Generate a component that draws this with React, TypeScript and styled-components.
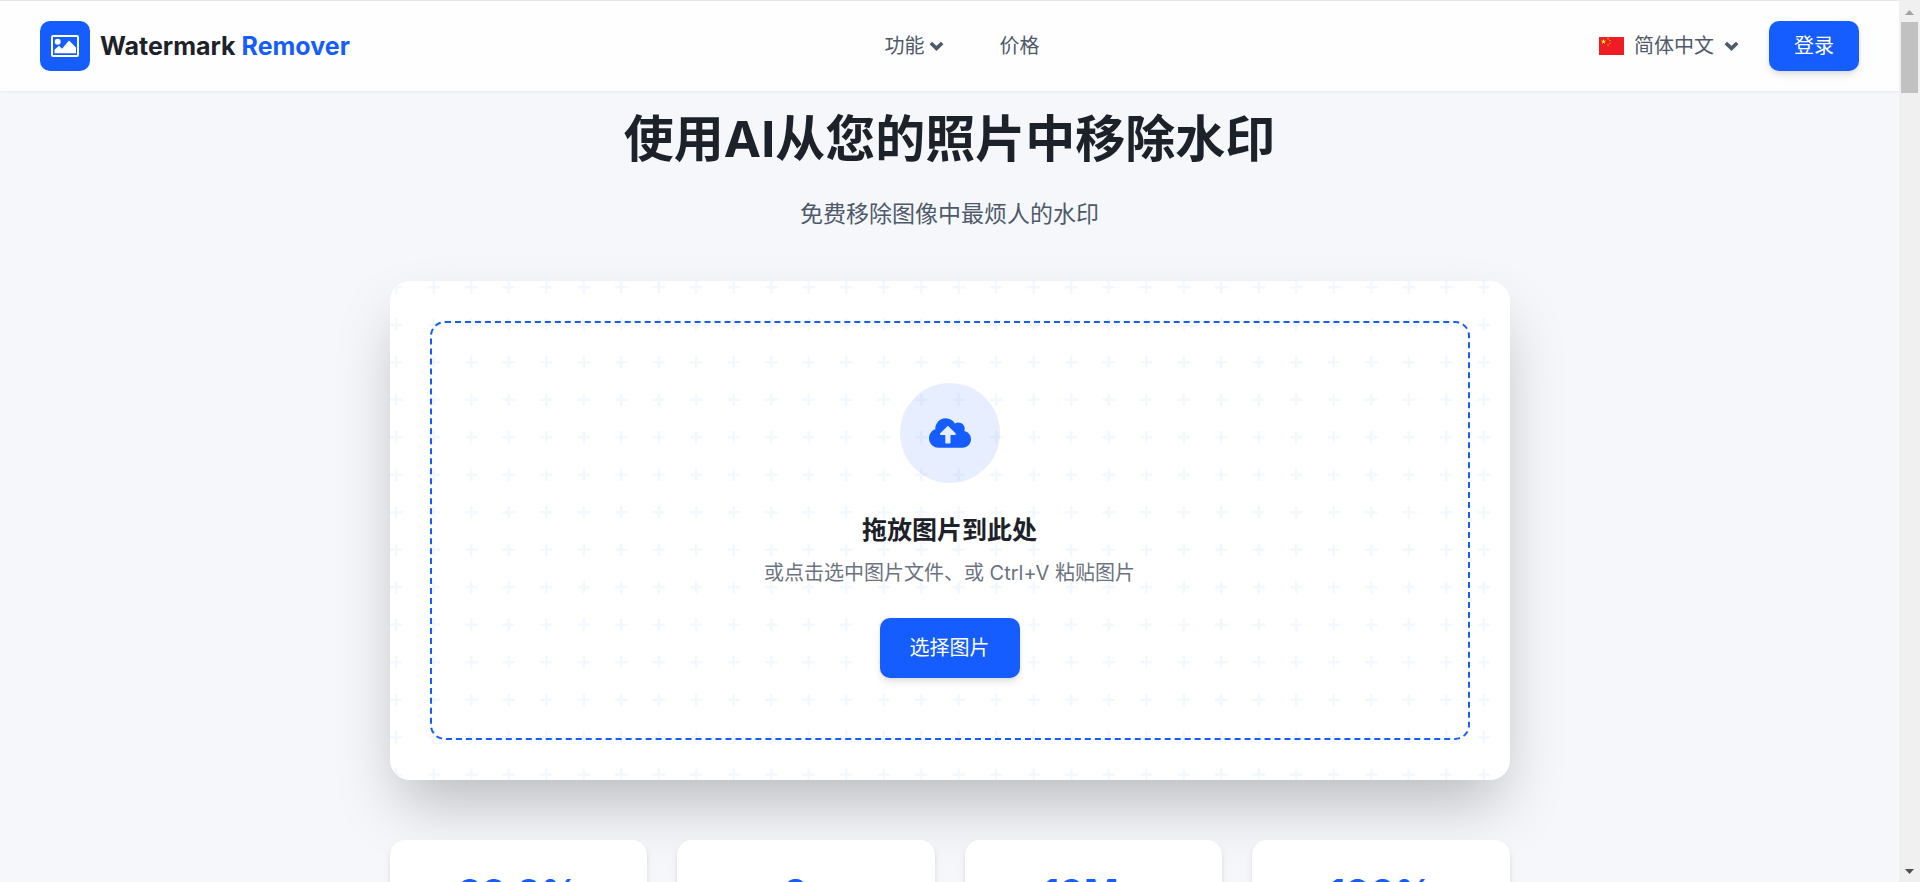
import React from "react";
import styled, { createGlobalStyle } from "styled-components";
import { FaCloudUploadAlt } from "react-icons/fa";

const pattern = `url("data:image/svg+xml,%3Csvg width='60' height='60' viewBox='0 0 60 60' xmlns='http://www.w3.org/2000/svg'%3E%3Cpath fill='%23165DFF' fill-opacity='0.05' d='M36 34v-4h-2v4h-4v2h4v4h2v-4h4v-2h-4zm0-30V0h-2v4h-4v2h4v4h2V6h4V4h-4zM6 34v-4H4v4H0v2h4v4h2v-4h4v-2H6zM6 4V0H4v4H0v2h4v4h2V6h4V4H6z'/%3E%3C/svg%3E")`;

const GlobalStyle = createGlobalStyle`
  *, *::before, *::after { box-sizing: border-box; }
  body {
    margin: 0;
    background: #f5f7fb;
    color: #1d2129;
    font-family: Inter, "Noto Sans CJK SC", sans-serif;
    font-size: 20px;
    line-height: 30px;
  }
  h1, h2, p { margin: 0; }
  button { font: inherit; cursor: pointer; }
`;

const Screen = styled.div`
  display: flex;
  height: 100vh;
  overflow: hidden;
`;

const Page = styled.div`
  flex: 1;
  min-width: 0;
  overflow: hidden;
`;

const Header = styled.header`
  display: flex;
  align-items: center;
  justify-content: space-between;
  padding: 20px 40px;
  background: #fefefe;
  border-top: 1px solid #e5e6e8;
  box-shadow: 0 1px 3px rgba(0, 0, 0, 0.06);
`;

const Actions = styled.div`
  display: flex;
  align-items: center;
  gap: 30px;
`;

const Brand = styled.a`
  display: flex;
  align-items: center;
  gap: 10px;
  color: #1d2129;
  font-size: 25px;
  font-weight: 700;
  text-decoration: none;
`;

const BrandMark = styled.span`
  display: grid;
  place-items: center;
  width: 50px;
  height: 50px;
  border-radius: 10px;
  background: #165dff;
`;

const Accent = styled.span`
  color: #165dff;
`;

const Nav = styled.nav`
  display: flex;
  align-items: center;
  gap: 55px;
  padding-right: 25px;
`;

const NavButton = styled.button<{ $gap: number }>`
  display: flex;
  align-items: center;
  gap: ${(p) => p.$gap}px;
  padding: 0;
  border: 0;
  background: none;
  color: #4e5969;
`;

const NavLink = styled.a`
  color: #4e5969;
  text-decoration: none;
`;

const PrimaryButton = styled.button<{ $large?: boolean }>`
  padding: ${(p) => (p.$large ? "15px 30px" : "10px 25px")};
  border: 0;
  border-radius: 10px;
  background: #165dff;
  color: #fff;
  box-shadow: 0 5px 8px -1px rgba(0, 0, 0, 0.1), 0 2px 5px -2px rgba(0, 0, 0, 0.1);
`;

const Main = styled.main`
  max-width: 1120px;
  margin: 0 auto;
  padding-top: 17px;
`;

const Hero = styled.section`
  text-align: center;
  padding-bottom: 49px;
`;

const Title = styled.h1`
  font-size: 50px;
  line-height: 62px;
  font-weight: 700;
`;

const Subtitle = styled.p`
  margin-top: 27px;
  color: #4e5969;
  font-size: 23px;
  line-height: 35px;
`;

const UploadCard = styled.section`
  padding: 40px;
  border-radius: 20px;
  background: #fff ${pattern} 0 0 / 75px 75px;
  box-shadow: 0 31px 62px -10px rgba(0, 0, 0, 0.25);
`;

const DropZone = styled.div`
  display: flex;
  flex-direction: column;
  align-items: center;
  padding: 60px;
  border: 2px dashed #165dff;
  border-radius: 15px;
`;

const UploadIcon = styled.div`
  display: grid;
  place-items: center;
  width: 100px;
  height: 100px;
  margin-bottom: 30px;
  border-radius: 50%;
  background: rgba(22, 93, 255, 0.1);
  color: #165dff;
`;

const DropTitle = styled.h2`
  font-size: 25px;
  line-height: 35px;
  font-weight: 700;
`;

const DropHint = styled.p`
  margin: 10px 0 30px;
  color: #6b7280;
`;

const Stats = styled.section`
  display: grid;
  grid-template-columns: repeat(4, 1fr);
  gap: 30px;
  margin-top: 60px;
`;

const StatCard = styled.div`
  padding: 30px;
  border-radius: 15px;
  background: #fff;
  text-align: center;
  box-shadow: 0 5px 8px -1px rgba(0, 0, 0, 0.1), 0 2px 5px -2px rgba(0, 0, 0, 0.1);
`;

const StatValue = styled.p`
  color: #165dff;
  font-size: 37px;
  line-height: 45px;
  font-weight: 700;
`;

const ScrollTrack = styled.div`
  display: flex;
  flex-direction: column;
  align-items: center;
  justify-content: space-between;
  width: 21px;
  padding: 10px 2px 8px;
  background: #f0f0f0;
`;

const ScrollTop = styled.div`
  display: flex;
  flex-direction: column;
  align-items: center;
  gap: 7px;
  width: 100%;
`;

const ScrollThumb = styled.div`
  width: 17px;
  height: 71px;
  background: #c1c1c1;
`;

const Arrow = ({ down }: { down?: boolean }) => (
  <svg width="9" height="5" viewBox="0 0 9 5" aria-hidden="true">
    <path d={down ? "M0 0h9L4.500 5z" : "M0 5h9L4.500 0z"} fill={down ? "#505050" : "#a3a3a3"} />
  </svg>
);

const Chevron = () => (
  <svg width="15" height="10" viewBox="0 0 15 10" fill="none" aria-hidden="true">
    <path d="M1.800 2l5.700 5.400L13.200 2" stroke="currentColor" strokeWidth="3.600" />
  </svg>
);

const PictureIcon = () => (
  <svg width="28" height="22" viewBox="0 0 28 22" fill="none" aria-hidden="true">
    <rect x="1" y="1" width="26" height="20" rx="1" stroke="#fff" strokeWidth="2" />
    <circle cx="6.700" cy="6.700" r="3" fill="#fff" />
    <path d="M3.500 18.300v-3.500l4.500-4 3 3 7-8.200 7 7v5.700z" fill="#fff" />
  </svg>
);

const star = "M0-1 .225-.309H.951L.363.118.588.809 0 .382-.588.809-.363.118-.951-.309H-.225z";

const ChinaFlag = () => (
  <svg width="25" height="18" viewBox="0 0 25 18" role="img" aria-label="中国">
    <rect width="25" height="18" fill="#ee1c25" />
    <g fill="#ff0">
      <path d={star} transform="translate(4.500 4.700) scale(2.700)" />
      <path d={star} transform="translate(9 1.700) scale(1) rotate(25)" />
      <path d={star} transform="translate(11 3.600) scale(1) rotate(45)" />
      <path d={star} transform="translate(11 6.200) scale(1)" />
      <path d={star} transform="translate(9 8.200) scale(1) rotate(25)" />
    </g>
  </svg>
);

const stats = ["99.9%", "3s", "10M+", "100%"];

export default function App() {
  return (
    <>
      <GlobalStyle />
      <Screen>
        <Page>
          <Header>
            <Brand href="#">
              <BrandMark>
                <PictureIcon />
              </BrandMark>
              <span>
                Watermark <Accent>Remover</Accent>
              </span>
            </Brand>
            <Nav>
              <NavButton type="button" $gap={5}>
                功能
                <Chevron />
              </NavButton>
              <NavLink href="#">价格</NavLink>
            </Nav>
            <Actions>
              <NavButton type="button" $gap={10}>
                <ChinaFlag />
                简体中文
                <Chevron />
              </NavButton>
              <PrimaryButton type="button">登录</PrimaryButton>
            </Actions>
          </Header>
          <Main>
            <Hero>
              <Title>使用AI从您的照片中移除水印</Title>
              <Subtitle>免费移除图像中最烦人的水印</Subtitle>
            </Hero>
            <UploadCard>
              <DropZone>
                <UploadIcon>
                  <FaCloudUploadAlt size={42} />
                </UploadIcon>
                <DropTitle>拖放图片到此处</DropTitle>
                <DropHint>或点击选中图片文件、或 Ctrl+V 粘贴图片</DropHint>
                <PrimaryButton type="button" $large>
                  选择图片
                </PrimaryButton>
              </DropZone>
            </UploadCard>
            <Stats>
              {stats.map((value) => (
                <StatCard key={value}>
                  <StatValue>{value}</StatValue>
                </StatCard>
              ))}
            </Stats>
          </Main>
        </Page>
        <ScrollTrack aria-hidden="true">
          <ScrollTop>
            <Arrow />
            <ScrollThumb />
          </ScrollTop>
          <Arrow down />
        </ScrollTrack>
      </Screen>
    </>
  );
}
